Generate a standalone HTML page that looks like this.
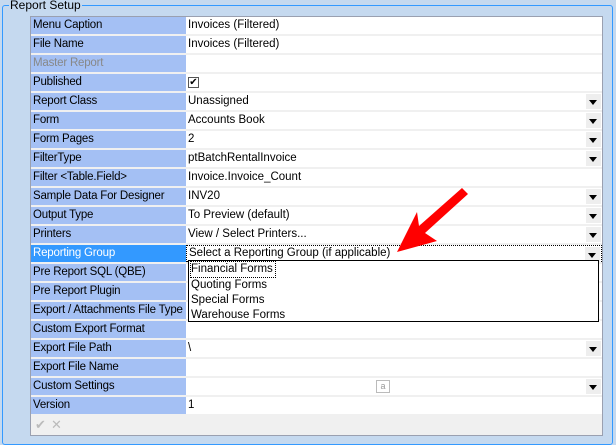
<!DOCTYPE html>
<html><head><style>
*{margin:0;padding:0;box-sizing:border-box}
body{width:616px;height:439px;background:#c5d9ef;font-family:"Liberation Sans",sans-serif;font-size:11.5px;position:relative;overflow:hidden}
.gb{position:absolute;left:2px;top:5px;width:611px;height:440px;border:1px solid #3399ff;border-radius:3px}
.gt{position:absolute;left:6px;background:#c5d9ef;padding:0 1px;font-size:12px;line-height:12px;top:-7px}
.grid{position:absolute;left:30px;top:16px;width:573px;border:1px solid #9aa0b0;background:#f0f0f0}
.row{height:19px;display:flex;border-bottom:2px solid #f0f0f0;position:relative}
.l{width:155px;background:#a4c0f4;padding-left:2px;line-height:17px;white-space:nowrap;overflow:hidden;letter-spacing:-0.2px}
.v{flex:1;background:#fff;padding-left:2px;line-height:17px;position:relative}
.dd::before{content:"";position:absolute;right:1px;top:1px;width:15px;height:15px;background:#eee}
.dd::after{content:"";position:absolute;right:5px;top:7px;border-left:4px solid transparent;border-right:4px solid transparent;border-top:5px solid #000}
.sel .l{background:#3399ff;color:#fff}
.tb{height:19px;background:#f0f0f0;position:relative;color:#bbb;font-size:13px}
.list{position:absolute;left:188px;top:260px;width:411px;height:62px;border:1px solid #000;background:#fff;line-height:15px;padding-left:2px}
</style></head><body>
<div class="gb"><div class="gt">Report Setup</div></div>
<div class="grid">
<div class="row"><div class="l">Menu Caption</div><div class="v">Invoices (Filtered)</div></div>
<div class="row"><div class="l">File Name</div><div class="v">Invoices (Filtered)</div></div>
<div class="row"><div class="l" style="color:#888">Master Report</div><div class="v"></div></div>
<div class="row"><div class="l">Published</div><div class="v"><span style="display:inline-block;width:11px;height:11px;border:1px solid #555;margin-top:3px;font-size:10px;line-height:9px;text-align:center">✔</span></div></div>
<div class="row"><div class="l">Report Class</div><div class="v dd">Unassigned</div></div>
<div class="row"><div class="l">Form</div><div class="v dd">Accounts Book</div></div>
<div class="row"><div class="l">Form Pages</div><div class="v dd">2</div></div>
<div class="row"><div class="l">FilterType</div><div class="v dd">ptBatchRentalInvoice</div></div>
<div class="row"><div class="l">Filter &lt;Table.Field&gt;</div><div class="v">Invoice.Invoice_Count</div></div>
<div class="row"><div class="l">Sample Data For Designer</div><div class="v dd">INV20</div></div>
<div class="row"><div class="l">Output Type</div><div class="v dd">To Preview (default)</div></div>
<div class="row"><div class="l">Printers</div><div class="v dd">View / Select Printers...</div></div>
<div class="row sel"><div class="l">Reporting Group</div><div class="v dd" style="border:1px dotted #000;line-height:15px">Select a Reporting Group (if applicable)</div></div>
<div class="row"><div class="l">Pre Report SQL (QBE)</div><div class="v"></div></div>
<div class="row"><div class="l">Pre Report Plugin</div><div class="v"></div></div>
<div class="row"><div class="l">Export / Attachments File Type</div><div class="v"></div></div>
<div class="row"><div class="l">Custom Export Format</div><div class="v"></div></div>
<div class="row"><div class="l">Export File Path</div><div class="v dd">\</div></div>
<div class="row"><div class="l">Export File Name</div><div class="v"></div></div>
<div class="row"><div class="l">Custom Settings</div><div class="v dd"><span style="position:absolute;left:190px;top:2px;width:14px;height:13px;border:1px solid #bbb;font-size:9px;color:#999;line-height:11px;text-align:center">a</span></div></div>
<div class="row"><div class="l">Version</div><div class="v">1</div></div>
<div class="tb"><span style="position:absolute;left:4px;top:1px">✔</span><span style="position:absolute;left:20px;top:1px">✕</span></div>
</div>
<div class="list"><div style="border:1px dotted #000;margin-left:-1px;width:fit-content;padding-right:2px">Financial Forms</div><div>Quoting Forms</div><div>Special Forms</div><div>Warehouse Forms</div></div>
<svg style="position:absolute;left:0;top:0" width="616" height="439"><polygon points="468,194 462,188 419,226 417,212 397,252 437,241 425,233" fill="#f00"/></svg>
</body></html>
